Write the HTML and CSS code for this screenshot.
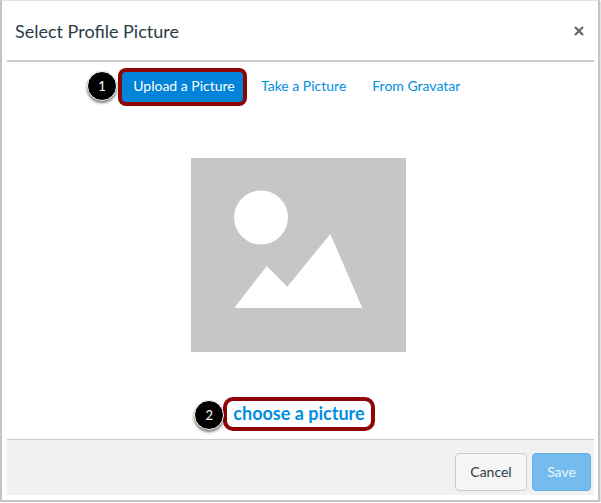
FILE: index.html
```html
<!DOCTYPE html>
<html lang="en">
  <head>
    <meta charset="UTF-8" />
    <meta name="viewport" content="width=device-width, initial-scale=1.0" />
    <title>Select Profile Picture</title>
    <link rel="stylesheet" href="styles.css">
  </head>
  <body>
    <div class="dialog">
      <div class="header">
        <h1>Select Profile Picture</h1>
        <svg class="close" viewBox="0 0 10 10" width="10" height="10" aria-label="Close">
          <path d="M1 1 9 9M9 1 1 9" />
        </svg>
      </div>
      <div class="content">
        <div class="tabs">
          <a class="tab active" href="#">Upload a Picture<span class="badge badge-one">1</span></a>
          <a class="tab" href="#">Take a Picture</a>
          <a class="tab" href="#">From Gravatar</a>
        </div>
        <svg class="placeholder" viewBox="0 0 215 194" width="215" height="194">
          <rect width="215" height="194" fill="#c6c6c6" />
          <circle cx="70" cy="59.5" r="27" fill="#fff" />
          <path d="M43.3 150 75.7 108 96.3 128.7 139.3 76 171.3 150Z" fill="#fff" />
        </svg>
        <a class="choose" href="#">choose a picture<span class="badge badge-two">2</span></a>
      </div>
      <div class="footer">
        <button class="btn btn-cancel">Cancel</button>
        <button class="btn btn-save">Save</button>
      </div>
    </div>
  </body>
</html>
```

FILE: styles.css
```css
body {
  margin: 0;
  background-color: #fff;
  font-family: Lato, "Open Sans", sans-serif;
}
.dialog {
  box-sizing: border-box;
  width: 600px;
  height: 502px;
  padding: 1px 4px 5px 5px;
  border: 2px solid #c4c4c4;
  border-top: 1px solid #e4e4e4;
  box-shadow: 0 1px 2px rgba(0, 0, 0, 0.35);
  display: flex;
  flex-direction: column;
}
.header {
  height: 58px;
  flex: none;
  padding: 0 10px 0 8px;
  border-bottom: 2px solid #c9cbcd;
  display: flex;
  align-items: center;
  justify-content: space-between;
}
h1 {
  margin: 0;
  font-size: 18px;
  font-weight: 400;
  color: #2d3b45;
}
.close {
  fill: none;
  stroke: #5f6568;
  stroke-width: 2.2;
}
.content {
  flex: 1;
  display: flex;
  flex-direction: column;
  align-items: center;
}
.tabs {
  margin-top: 10px;
  display: flex;
  gap: 26px;
  align-self: flex-start;
  padding-left: 115px;
}
.tab {
  position: relative;
  display: block;
  height: 30px;
  line-height: 28px;
  font-size: 14px;
  color: #008ee2;
  text-decoration: none;
}
.tab.active {
  width: 121px;
  margin-right: -8px;
  padding-left: 3px;
  box-sizing: border-box;
  text-align: center;
  color: #fff;
  background-color: #0083d9;
  border-radius: 4px;
  box-shadow: 0 0 0 4px #8f0505;
}
.placeholder {
  display: block;
  margin-top: 56px;
  margin-left: -4px;
}
.choose {
  position: relative;
  margin-top: 45px;
  margin-right: 3px;
  padding: 0 6px;
  height: 26px;
  line-height: 24px;
  font-size: 18px;
  font-weight: 700;
  color: #008ee2;
  text-decoration: none;
  border: 4px solid #8f0505;
  border-radius: 10px;
}
.badge {
  position: absolute;
  box-sizing: border-box;
  width: 30px;
  height: 30px;
  border: 1px solid #fff;
  border-radius: 50%;
  background-color: #000;
  color: #fff;
  font-size: 13px;
  font-weight: 400;
  line-height: 28px;
  text-align: center;
  box-shadow: 0 2px 3px rgba(0, 0, 0, 0.55);
}
.badge-one {
  left: -35px;
  top: -1px;
}
.badge-two {
  left: -33px;
  top: -1px;
}
.footer {
  box-sizing: border-box;
  height: 56px;
  flex: none;
  padding: 8px 3px 0 0;
  background-color: #f1f1f1;
  border-top: 1px solid #c9cbcd;
  display: flex;
  align-items: center;
  justify-content: flex-end;
  gap: 5px;
}
.btn {
  box-sizing: border-box;
  height: 38px;
  border-radius: 4px;
  font-family: inherit;
  font-size: 14px;
}
.btn-cancel {
  width: 72px;
  background-color: #f5f5f5;
  border: 1px solid #c7cdd1;
  color: #2d3b45;
}
.btn-save {
  width: 59px;
  background-color: #73bced;
  border: 1px solid #66aee0;
  color: #eef7fd;
}
```
